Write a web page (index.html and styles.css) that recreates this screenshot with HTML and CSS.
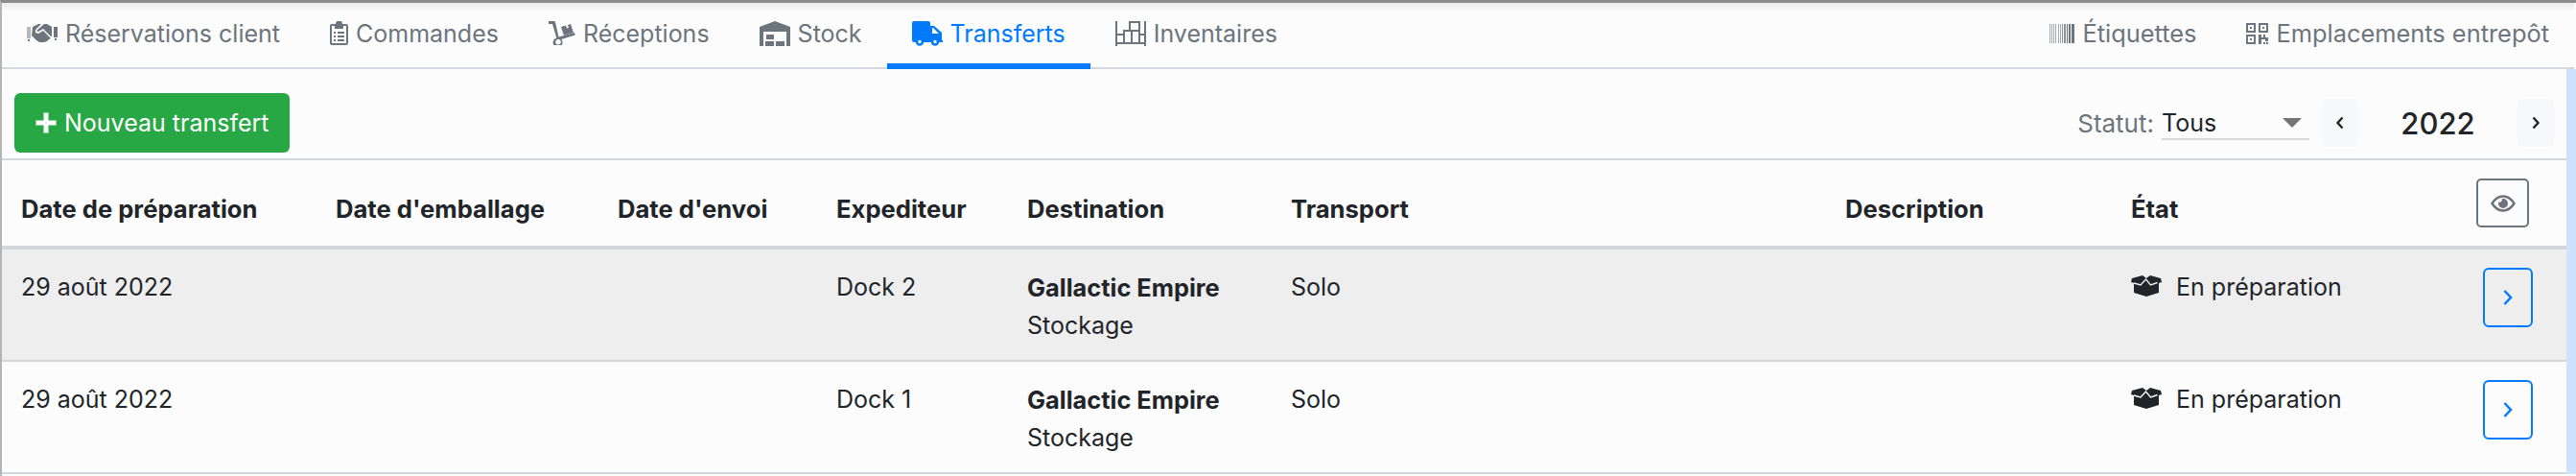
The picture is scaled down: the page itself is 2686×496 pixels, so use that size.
FILE: index.html
```html
<!doctype html>
<html>

<head>
	<meta charset="UTF-8">
	<title>Transferts</title>
	<link rel="stylesheet" href="styles.css">
</head>

<body>
	<nav class="tabs">
		<a class="tab"><svg class="ico" width="32" height="19" viewBox="0 0 32 19"><path opacity=".5" d="M0 3h4v12H0z"/><path d="M28 3h4v11h-4zM1 16h2v2H1zM29 15h2v2h-2z"/><path d="M6 3l6-3h3L9 6v3l3 1 5-3 8 8-2 1-2 2-3 1-2 1-3-1-3-2-3-3-2-2z"/><path d="M18 0h3l5 3v10h-1l-8-8-5 3-2-1z"/></svg>Réservations client</a>
		<a class="tab"><svg class="ico" width="19" height="25" viewBox="0 0 19 25"><path fill-rule="evenodd" d="M6 3a3.500 3.500 0 0 1 7 0h4a2 2 0 0 1 2 2v18a2 2 0 0 1-2 2H2a2 2 0 0 1-2-2V5a2 2 0 0 1 2-2zM2 5v18h15V5h-3v3H5V5zm2 6h2v2H4zm4 0h7v2H8zm-4 4h2v2H4zm4 0h7v2H8zm-4 4h2v2H4zm4 0h7v2H8z"/></svg>Commandes</a>
		<a class="tab"><svg class="ico" width="28" height="25" viewBox="0 0 28 25"><path fill-rule="evenodd" d="M0 0h6l1 1 3.500 15.500 16.500-4.500.8 2.500-14.500 4.500a5 5 0 1 1-5-1.500L4 3H0zM10 19a2.800 2.800 0 1 0 .1 0z"/><path d="M13 6l5-1.500 1 3 2-.5-1-3 3-1 3 9-10 3z"/></svg>Réceptions</a>
		<a class="tab"><svg class="ico" width="32" height="26" viewBox="0 0 32 26"><path d="M16 0 32 6v20h-4V11H4v15H0V6zM7 14h8v5H7zM6 21h9v5H6zM17 21h9v5h-9z"/></svg>Stock</a>
		<a class="tab active"><svg class="ico" width="32" height="26" viewBox="0 0 32 26"><path fill-rule="evenodd" d="M2 0h15a2 2 0 0 1 2 2v3h4l8 7v8h1v2H2a2 2 0 0 1-2-2V2a2 2 0 0 1 2-2zm19 7v6h7l-6-6z"/><circle class="wheel" cx="8" cy="21.500" r="3"/><circle class="wheel" cx="24" cy="21.500" r="3"/></svg>Transferts</a>
		<a class="tab"><svg class="ico ico_line" width="32" height="26" viewBox="0 0 32 26"><path d="M1 0v26M31 0v26M1 23h30M1 14h7M25 14h6M9 22V10h16v12M17 10v12M15 10V1h10v9"/></svg>Inventaires</a>
		<div class="tabs_end">
			<a class="tab"><svg class="ico" width="26" height="20" viewBox="0 0 26 20"><path opacity=".6" d="M0 0h1v20H0zM2 0h1v20H2zM4 0h1v20H4zM6 0h1v20H6zM9 0h1v20H9zM11 0h1v20h-1z"/><path opacity=".8" d="M13 0h1v20h-1zM15 0h2v20h-2z"/><path d="M18 0h1v20h-1zM20 0h2v20h-2zM23 0h3v20h-3z"/></svg>Étiquettes</a>
			<a class="tab"><svg class="ico" width="23" height="22" viewBox="0 0 23 22"><path fill-rule="evenodd" d="M0 0h10v10H0zm2 2v6h6V2zm2 2h2v2H4zM13 0h10v10H13zm2 2v6h6V2zm2 2h2v2h-2zM0 12h10v10H0zm2 2v6h6v-6zm2 2h2v2H4zM13 12h3v3h2v-3h2v3h3v4h-3v-2h-4v5h-3zM18 20h2v2h-2zM21 20h2v2h-2z"/></svg>Emplacements entrepôt</a>
		</div>
	</nav>

	<div class="content">
		<div class="toolbar">
			<button class="btn_add"><svg width="24" height="24" viewBox="0 0 24 24"><path d="M9.500 1.500h5v8h8v5h-8v8h-5v-8h-8v-5h8z"/></svg>Nouveau transfert</button>
			<div class="filters">
				<span class="status_label">Statut:</span>
				<div class="status_select">Tous<i class="caret"></i></div>
				<button class="year_btn"><svg width="12" height="16" viewBox="0 0 12 16"><path d="M8.500 2.500 3.500 8l5 5.500"/></svg></button>
				<span class="year">2022</span>
				<button class="year_btn"><svg width="12" height="16" viewBox="0 0 12 16"><path d="m3.500 2.500 5 5.500-5 5.500"/></svg></button>
			</div>
		</div>

		<table class="list">
			<colgroup>
				<col class="c1"><col class="c2"><col class="c3"><col class="c4"><col class="c5"><col class="c6"><col class="c7"><col class="c8"><col>
			</colgroup>
			<thead>
				<tr>
					<th>Date de préparation</th>
					<th>Date d'emballage</th>
					<th>Date d'envoi</th>
					<th>Expediteur</th>
					<th>Destination</th>
					<th>Transport</th>
					<th>Description</th>
					<th>État</th>
					<th class="col_btn">
						<button class="btn_eye"><svg width="26" height="18" viewBox="0 0 26 18"><path class="eye_line" d="M1.500 9C5 3.500 9 1.500 13 1.500S21 3.500 24.500 9C21 14.500 17 16.500 13 16.500S5 14.500 1.500 9z"/><path d="M13 4a5 5 0 1 1-5 5c0-.6.1-1 .3-1.500a2.500 2.500 0 0 0 3.300-3.300c.4-.1.900-.2 1.400-.2z"/></svg></button>
					</th>
				</tr>
			</thead>
			<tbody>
				<tr class="selected">
					<td>29 août 2022</td>
					<td></td>
					<td></td>
					<td>Dock 2</td>
					<td><b>Gallactic Empire</b><br>Stockage</td>
					<td>Solo</td>
					<td></td>
					<td><svg class="box" width="32" height="22" viewBox="0 0 32 22"><path d="M1 3 12 0l4 3 4-3 11 3 1 4-3 1v10l-13 4-13-4V8L0 7z"/><path class="box_fold" d="M3 8l7 2 5.500-6 5 6 7-2.500"/></svg>En préparation</td>
					<td class="col_btn"><button class="btn_open"><svg width="12" height="18" viewBox="0 0 12 18"><path d="m2.500 2 6.500 7-6.500 7"/></svg></button></td>
				</tr>
				<tr>
					<td>29 août 2022</td>
					<td></td>
					<td></td>
					<td>Dock 1</td>
					<td><b>Gallactic Empire</b><br>Stockage</td>
					<td>Solo</td>
					<td></td>
					<td><svg class="box" width="32" height="22" viewBox="0 0 32 22"><path d="M1 3 12 0l4 3 4-3 11 3 1 4-3 1v10l-13 4-13-4V8L0 7z"/><path class="box_fold" d="M3 8l7 2 5.500-6 5 6 7-2.500"/></svg>En préparation</td>
					<td class="col_btn"><button class="btn_open"><svg width="12" height="18" viewBox="0 0 12 18"><path d="m2.500 2 6.500 7-6.500 7"/></svg></button></td>
				</tr>
			</tbody>
		</table>
	</div>
</body>

</html>
```

FILE: styles.css
```css
* {
	box-sizing: border-box;
}

body {
	margin: 0;
	height: 496px;
	overflow: hidden;
	background: #fcfcfc;
	border-left: 2px solid #b4b4b4;
	border-top: 3px solid #8c8c8c;
	color: #212529;
	font-family: Inter, "Liberation Sans", sans-serif;
	font-size: 25px;
}

button {
	font-family: inherit;
	padding: 0;
}

/* onglets */
.tabs {
	display: flex;
	height: 69px;
	margin-right: 2px;
	border-bottom: 2px solid #d3d7dc;
	background: linear-gradient(#ececec, #fcfcfc 10px);
}

.tab {
	display: flex;
	align-items: center;
	gap: 8px;
	height: 69px;
	padding: 0 26px 6px;
	color: #6c757d;
}

.tab .ico {
	fill: #6c757d;
}

.tab .ico_line {
	fill: none;
	stroke: #6c757d;
	stroke-width: 2;
}

.tab.active {
	color: #007bff;
	border-bottom: 6px solid #007bff;
	padding-bottom: 0;
}

.tab.active .ico {
	fill: #007bff;
}

.wheel {
	stroke: #007bff;
	stroke-width: 2.5;
}

.tab.active .ico .wheel {
	fill: #fcfcfc;
}

.tabs_end {
	display: flex;
	margin-left: auto;
	font-size: 25.4px;
}

/* contenu */
.content {
	margin-right: 10px;
	box-shadow: 12px 0 0 #cfe2fb;
}

.toolbar {
	display: flex;
	align-items: center;
	justify-content: space-between;
	height: 95px;
	padding: 25px 13px 6px 13px;
	border-bottom: 2px solid #d3d7dc;
}

.btn_add {
	display: flex;
	align-items: center;
	gap: 7px;
	width: 287px;
	height: 62px;
	padding-left: 21px;
	border: 0;
	border-radius: 6px;
	background: #28a745;
	color: #fff;
	font-size: 25px;
}

.btn_add svg {
	fill: #fff;
}

.filters {
	display: flex;
	align-items: center;
}

.status_label {
	color: #6c757d;
	margin-right: 8px;
	font-size: 26px;
}

.status_select {
	display: flex;
	justify-content: space-between;
	align-items: center;
	width: 154px;
	height: 36px;
	padding: 2px 8px 0 0;
	margin: 0 13px 0 0;
	border-bottom: 2px solid #d8d8d8;
}

.caret {
	border-left: 10px solid transparent;
	border-right: 10px solid transparent;
	border-top: 10px solid #757575;
}

.year_btn {
	display: flex;
	align-items: center;
	justify-content: center;
	width: 38px;
	height: 50px;
	border: 0;
	border-radius: 6px;
	background: #f7f8f9;
}

.year_btn svg path {
	fill: none;
	stroke: #212529;
	stroke-width: 2.4;
}

.year {
	width: 166px;
	text-align: center;
	font-size: 31px;
	font-weight: 500;
}

/* tableau */
.list {
	width: 100%;
	table-layout: fixed;
	border-collapse: separate;
	border-spacing: 0;
}

.c1 { width: 328px; }
.c2 { width: 294px; }
.c3 { width: 228px; }
.c4 { width: 199px; }
.c5 { width: 275px; }
.c6 { width: 578px; }
.c7 { width: 298px; }
.c8 { width: 360px; }

.list th {
	height: 93px;
	padding: 0 0 19px 20px;
	border-bottom: 4px solid #d3d7dc;
	text-align: left;
	vertical-align: bottom;
	line-height: 39px;
	font-size: 25.6px;
	font-weight: 700;
}

.list td {
	height: 117px;
	padding: 20px 0 0 20px;
	border-bottom: 2px solid #d3d7dc;
	vertical-align: top;
	line-height: 39px;
}

.list b {
	font-size: 25.4px;
	font-weight: 700;
}

.selected td {
	background: #eeeeee;
}

.list .col_btn {
	padding-left: 0;
}

.list td.col_btn {
	padding-top: 0;
}

.box {
	fill: #212529;
	margin-right: 15px;
	vertical-align: -1px;
}

.box_fold {
	fill: none;
	stroke: #fcfcfc;
	stroke-width: 1.4;
}

.selected .box_fold {
	stroke: #eeeeee;
}

.btn_eye {
	display: flex;
	align-items: center;
	justify-content: center;
	width: 55px;
	height: 51px;
	margin: 0 0 0 20px;
	background: none;
	border: 2px solid #6c757d;
	border-radius: 5px;
}

.btn_eye svg {
	fill: #6c757d;
}

.eye_line {
	fill: none;
	stroke: #6c757d;
	stroke-width: 2.5;
}

.btn_open {
	display: flex;
	align-items: center;
	justify-content: center;
	width: 52px;
	height: 62px;
	margin: 19px 0 0 27px;
	background: none;
	border: 2px solid #007bff;
	border-radius: 6px;
}

.btn_open svg path {
	fill: none;
	stroke: #007bff;
	stroke-width: 2.5;
}
```
